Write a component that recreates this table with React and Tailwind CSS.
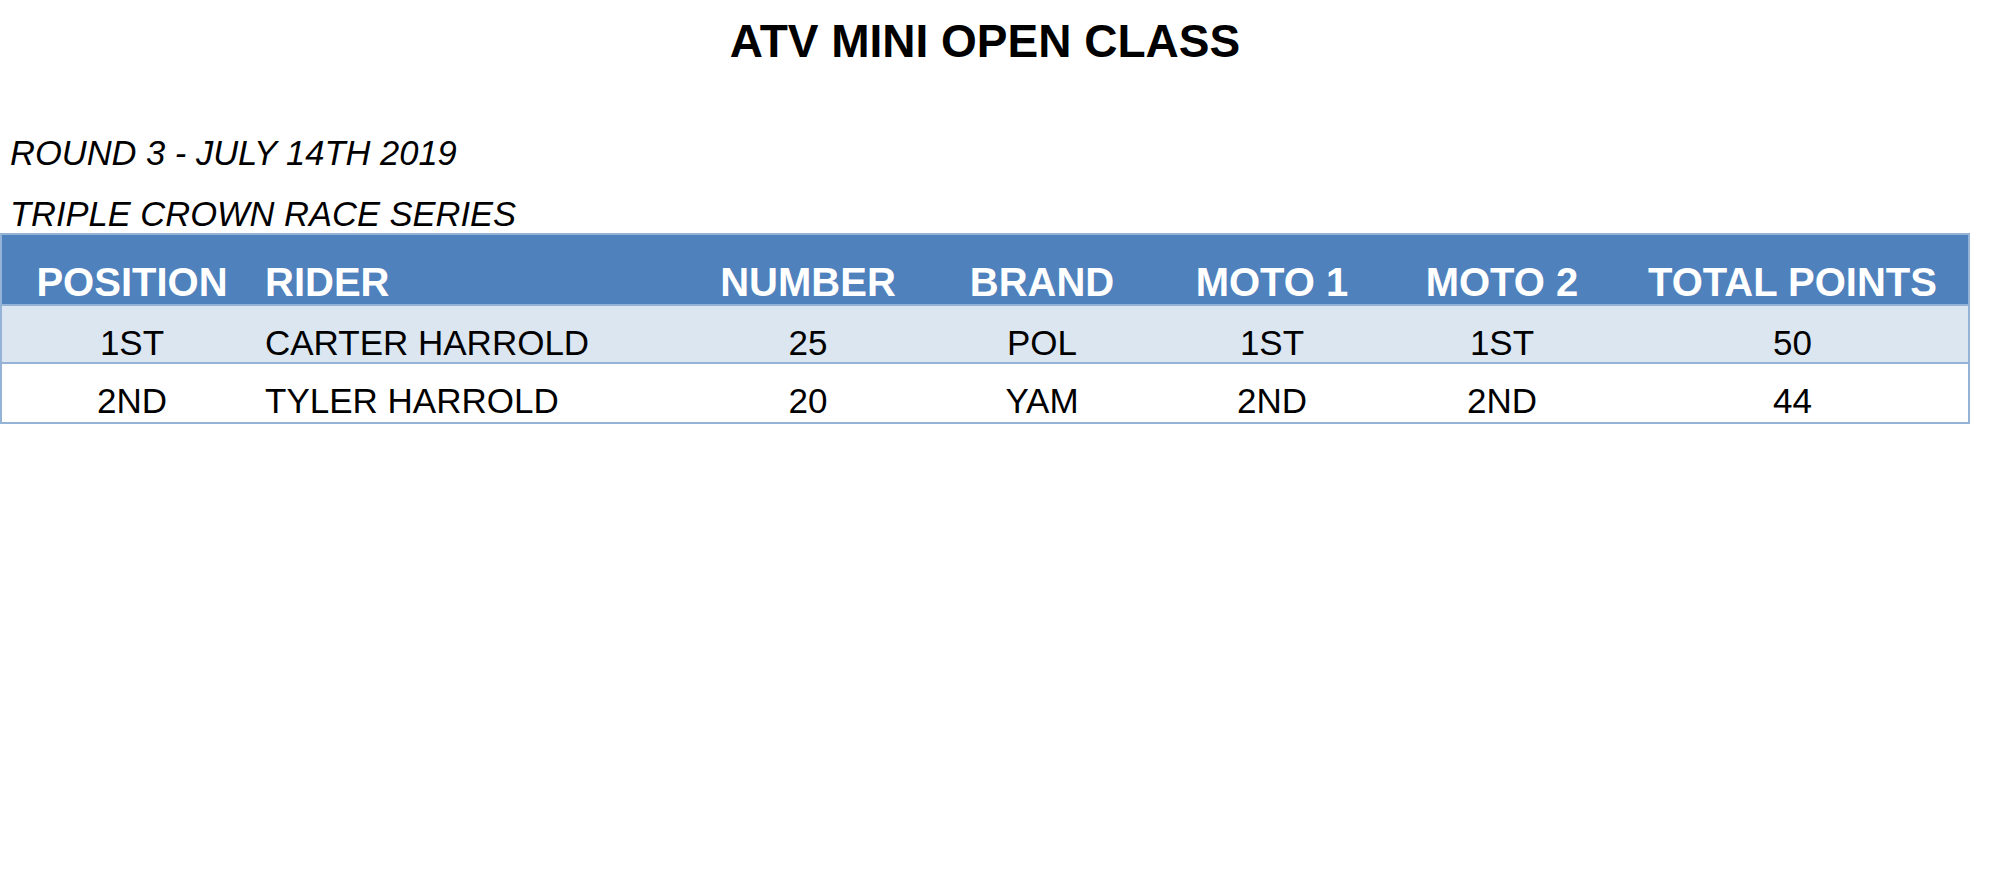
import React from "react";

const columns = [
  { key: "position", label: "POSITION", align: "center" },
  { key: "rider", label: "RIDER", align: "left" },
  { key: "number", label: "NUMBER", align: "center" },
  { key: "brand", label: "BRAND", align: "center" },
  { key: "moto1", label: "MOTO 1", align: "center" },
  { key: "moto2", label: "MOTO 2", align: "center" },
  { key: "total", label: "TOTAL POINTS", align: "center" },
];

const results = [
  { position: "1ST", rider: "CARTER HARROLD", number: "25", brand: "POL", moto1: "1ST", moto2: "1ST", total: "50" },
  { position: "2ND", rider: "TYLER HARROLD", number: "20", brand: "YAM", moto1: "2ND", moto2: "2ND", total: "44" },
];

const gridCols = "grid grid-cols-[260px_427px_238px_230px_230px_230px_351px]";

const cellAlign = (align) =>
  align === "left" ? "text-left pl-[3px]" : "text-center";

export default function App() {
  return (
    <div className="min-h-screen bg-white font-['Liberation_Sans',Arial,sans-serif] text-black">
      <div className="w-[1970px]">
        <h1 className="pt-[18px] text-center text-[46px] font-bold leading-none">
          ATV MINI OPEN CLASS
        </h1>

        <p className="mt-[72px] pl-[10px] text-[34.5px] italic leading-none">
          ROUND 3 - JULY 14TH 2019
        </p>
        <p className="mt-[26px] pl-[10px] text-[34.5px] italic leading-none">
          TRIPLE CROWN RACE SERIES
        </p>

        {/* results table */}
        <div className="mt-[2px] border-2 border-[#95b3d7]">
          <div className={`${gridCols} h-[71px] border-b-2 border-[#95b3d7] bg-[#4f81bd] text-white`}>
            {columns.map((col) => (
              <div
                key={col.key}
                className={`${cellAlign(col.align)} pt-[27px] text-[40px] font-bold leading-none`}
              >
                {col.label}
              </div>
            ))}
          </div>

          {results.map((row, i) => (
            <div
              key={row.position}
              className={`${gridCols} h-[58px] ${i === 0 ? "border-b-2 border-[#95b3d7] bg-[#dce6f1]" : "bg-white"}`}
            >
              {columns.map((col) => (
                <div
                  key={col.key}
                  className={`${cellAlign(col.align)} pt-[19px] text-[35px] leading-none`}
                >
                  {row[col.key]}
                </div>
              ))}
            </div>
          ))}
        </div>
      </div>
    </div>
  );
}
